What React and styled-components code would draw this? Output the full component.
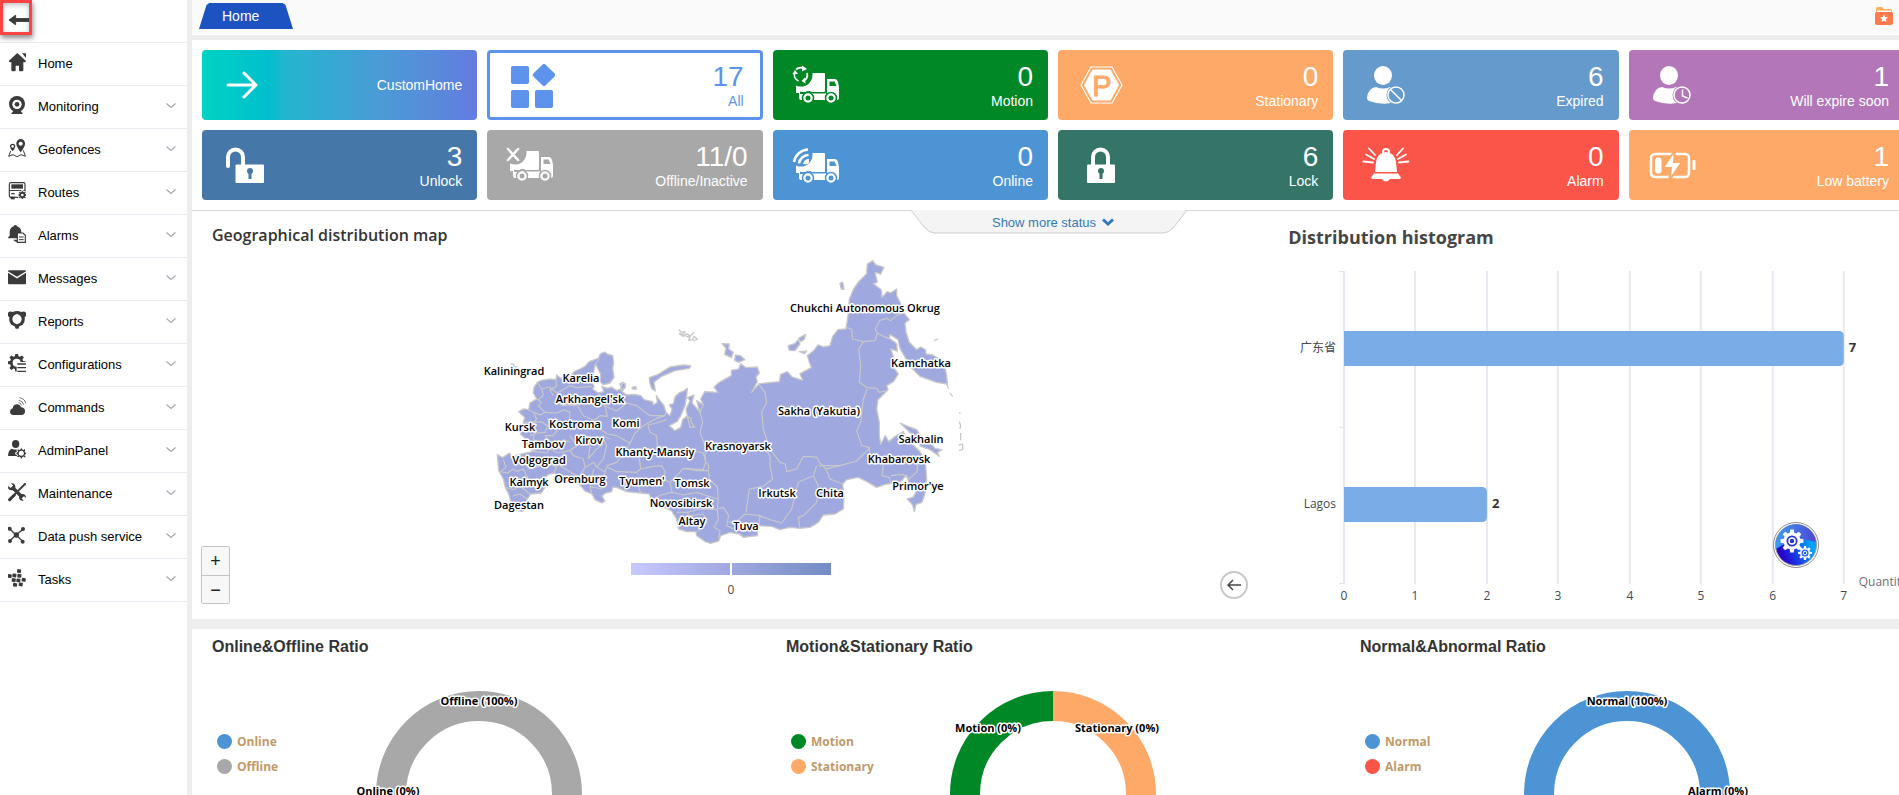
import styled, { createGlobalStyle } from "styled-components";

const App = () => {
  return (
    <Page>
      <GlobalStyle />
      <Sidebar>
        <SidebarTop>
          <CollapseBtn type="button" aria-label="Collapse menu">
            <svg width="21" height="12" viewBox="0 0 22 12">
              <path d="M1 6 8 1v3.500h14v3H8V11z" fill={ICON} stroke={ICON} strokeLinejoin="round" />
            </svg>
          </CollapseBtn>
        </SidebarTop>
        {menuList.map((menu) => (
          <MenuItem key={menu.name} href="#">
            <svg width="18" height="20" viewBox="0 0 54 60" fill={ICON} stroke="none">
              {menu.icon}
            </svg>
            <MenuName>{menu.name}</MenuName>
            {menu.name !== "Home" && (
              <svg width="10" height="6" viewBox="0 0 10 6" fill="none">
                <path d="M0.500 0.500 5 4.500 9.500 0.500" stroke="#a3a7b0" strokeWidth="1.200" />
              </svg>
            )}
          </MenuItem>
        ))}
      </Sidebar>
      <Main>
        <TabBar>
          <Tab href="#">Home</Tab>
          <FavoriteBtn type="button" aria-label="Favorites">
            <svg width="18" height="18" viewBox="0 0 18 18">
              <path d="M1 6V2q0-2 2-2h4l2 2h6q2 0 2 2v4z" fill="#ffab57" />
              <path d="M2 3.500h14V8H2z" fill="#fff" />
              <rect y="5" width="18" height="13" rx="2" fill="#ff7a4d" />
              <path
                d="m9 7.500 1.200 2.600 2.800.3-2.100 1.900.6 2.800L9 13.700l-2.500 1.400.6-2.800L5 10.400l2.800-.3z"
                fill="#fff"
              />
            </svg>
          </FavoriteBtn>
        </TabBar>
        <Content>
          <StatusGrid>
            {statusList.map((status) => (
              <StatusCard key={status.name} type="button" $bg={status.bg} $outlined={status.outlined}>
                <svg width="50" height="50" viewBox="0 0 50 50" fill="currentColor">
                  {status.icon}
                </svg>
                <StatusText>
                  {status.count && <StatusCount>{status.count}</StatusCount>}
                  <StatusName>{status.name}</StatusName>
                </StatusText>
              </StatusCard>
            ))}
          </StatusGrid>
          <ChartRow>
            <MoreStatus type="button">
              <svg width="276" height="24" viewBox="0 0 276 24">
                <path d="M0 0 13 17Q18 23 24 23H252Q258 23 263 17L276 0" fill="#f4f4f4" stroke="#ccc" />
              </svg>
              <MoreStatusText>
                Show more status
                <svg width="12" height="8" viewBox="0 0 12 8" fill="none">
                  <path d="M1 1.500 6 6 11 1.500" stroke="#337ab7" strokeWidth="3" />
                </svg>
              </MoreStatusText>
            </MoreStatus>
            <MapPanel>
              <MapTitle>Geographical distribution map</MapTitle>
              <RegionMap />
              <ZoomBox>
                <ZoomBtn type="button" aria-label="Zoom in">
                  +
                </ZoomBtn>
                <ZoomBtn type="button" aria-label="Zoom out">
                  −
                </ZoomBtn>
              </ZoomBox>
              <BackBtn type="button" aria-label="Back">
                <svg width="14" height="12" viewBox="0 0 14 12" fill="none" stroke="#444" strokeWidth="1.500">
                  <path d="M14 6H1M6 1 1 6l5 5" />
                </svg>
              </BackBtn>
            </MapPanel>
            <HistogramPanel>
              <HistogramTitle>Distribution histogram</HistogramTitle>
              <Histogram />
            </HistogramPanel>
          </ChartRow>
          <RatioRow>
            {ratioList.map((ratio) => (
              <RatioPanel key={ratio.title}>
                <RatioTitle>{ratio.title}</RatioTitle>
                <RatioBody>
                  <Legend>
                    {ratio.legend.map((item) => (
                      <LegendItem key={item.name}>
                        <LegendDot $color={item.color} />
                        {item.name}
                      </LegendItem>
                    ))}
                  </Legend>
                  <Donut colors={ratio.colors} labels={ratio.labels} />
                </RatioBody>
              </RatioPanel>
            ))}
          </RatioRow>
        </Content>
      </Main>
      <SettingsBtn type="button" aria-label="Settings">
        <SettingsIcon />
      </SettingsBtn>
    </Page>
  );
};

const ICON = "#3b3b3b";

// polygon points of a gear with n teeth
const gear = (cx, cy, n, outer, inner) => {
  const points = [];
  for (let i = 0; i < n; i++) {
    const step = (Math.PI * 2) / n;
    [
      [-0.34, inner],
      [-0.2, outer],
      [0.2, outer],
      [0.34, inner],
    ].forEach(([t, r]) => {
      const a = step * (i + t) - Math.PI / 2;
      points.push(`${(cx + r * Math.cos(a)).toFixed(1)},${(cy + r * Math.sin(a)).toFixed(1)}`);
    });
  }
  return points.join(" ");
};

const Truck = ({ cut, y = 0 }) => (
  <g transform={`translate(0 ${y})`}>
    <rect x="9" y="13" width="25" height="19" rx="1" />
    <path d="M36 19h8q2 0 3 3l1 5v11q0 2-2 2H36z" />
    <path d="M38.500 21.500h5l2 4.500h-7z" fill={cut} />
    <path d="M5 24h4v9h26v7H10q-2 0-2-3v-4H5z" />
    <path d="M9 33.500h4Q17 29.500 22 33h12.500" fill="none" stroke={cut} />
    {[17, 40].map((x) => (
      <g key={x}>
        <circle cx={x} cy="38" r="5.500" stroke={cut} strokeWidth="1.500" />
        <circle cx={x} cy="38" r="2.500" fill={cut} />
      </g>
    ))}
    <circle cx="10" cy="15" r="11.500" fill={cut} />
  </g>
);

const Person = () => (
  <>
    <ellipse cx="22" cy="15.500" rx="9" ry="9.500" />
    <path d="M15 27Q22 30 29 27l8 5-3 10Q22 46 8 41q-2-1-2-3Q7 28 15 27z" />
  </>
);

const Keyhole = ({ x, cut }) => (
  <g fill={cut}>
    <circle cx={x} cy="31" r="3" />
    <rect x={x - 1.5} y="31" width="3" height="8" />
  </g>
);

const RegionMap = () => (
  <svg width="500" height="350" viewBox="10 0 500 350" role="img" aria-label="Geographical distribution map">
    <defs>
      <linearGradient id="visualMap">
        <stop offset="0" stopColor="#c8c8ff" />
        <stop offset="0.500" stopColor="#9fa8df" />
        <stop offset="1" stopColor="#748cc4" />
      </linearGradient>
    </defs>
    <g transform="scale(0.33333)" fill="#9fa8df" stroke="#c8c8c8" strokeWidth="4" strokeLinejoin="round">
      {landList.map((points) => (
        <polygon key={points} points={points} />
      ))}
      {borderList.map((points) => (
        <polyline key={points} points={points} fill="none" strokeWidth="3.500" />
      ))}
      {isletList.map((points) => (
        <polyline key={points} points={points} fill="none" />
      ))}
    </g>
    {regionList.map(([name, x, y]) => (
      <MapLabel key={name} x={x} y={y} dy="4">
        {name}
      </MapLabel>
    ))}
    <rect x="161" y="314" width="200" height="12" fill="url(#visualMap)" />
    <rect x="260" y="314" width="2" height="12" fill="#fff" />
    <AxisText x="261" y="345" textAnchor="middle">
      0
    </AxisText>
  </svg>
);

const Histogram = () => (
  <ChartSvg viewBox="0 0 606 350" role="img" aria-label="Distribution histogram">
    {[0, 1, 2, 3, 4, 5, 6, 7].map((n) => {
      const x = 56 + Math.round((n * 500) / 7);
      return (
        <g key={n}>
          <rect x={x - 1} y="11" width="2" height="313" fill="#e8e8f0" />
          <AxisText x={x} y="340" textAnchor="middle">
            {n}
          </AxisText>
        </g>
      );
    })}
    {[11, 167, 323].map((y) => (
      <rect key={y} x="51" y={y} width="5" height="1" fill="#e0e3ee" />
    ))}
    {barList.map((bar) => {
      const right = 56 + Math.round((bar.value * 500) / 7);
      return (
        <g key={bar.name}>
          <path
            d={`M56 ${bar.y}H${right - 5}q5 0 5 5v25q0 5-5 5H56z`}
            fill="#7aade8"
          />
          <AxisText x="48" y={bar.y + 21} textAnchor="end">
            {bar.name}
          </AxisText>
          <BarValue x={right + 5} y={bar.y + 21}>
            {bar.value}
          </BarValue>
        </g>
      );
    })}
    <AxisText x="571" y="326" $light>
      Quantity
    </AxisText>
  </ChartSvg>
);

const Donut = ({ colors, labels }) => (
  <DonutSvg width="206" height="206" viewBox="0 0 206 206">
    <path d="M103 15A88 88 0 0 0 103 191" fill="none" stroke={colors[0]} strokeWidth="30" />
    <path d="M103 15A88 88 0 0 1 103 191" fill="none" stroke={colors[1]} strokeWidth="30" />
    {labels.map(([text, x, y]) => (
      <DonutLabel key={text} x={x} y={y} dy="3">
        {text}
      </DonutLabel>
    ))}
  </DonutSvg>
);

const SettingsIcon = () => (
  <svg width="46" height="46" viewBox="0 0 46 46">
    <defs>
      <linearGradient id="ball" x1="0.200" y1="0.900" x2="0.900" y2="0.600">
        <stop offset="0" stopColor="#2a00c8" />
        <stop offset="0.450" stopColor="#1a3ee8" />
        <stop offset="1" stopColor="#00a2ff" />
      </linearGradient>
      <linearGradient id="shine">
        <stop offset="0" stopColor="#3b9bf2" />
        <stop offset="1" stopColor="#5046d2" />
      </linearGradient>
    </defs>
    <circle cx="23" cy="23" r="22.500" fill="#fff" stroke="#8a8a8a" />
    <circle cx="23" cy="23" r="20.500" fill="url(#ball)" stroke="#9a9a9a" />
    <path d="M3 25A20 20 0 0 1 43 20Q22 14 3 27z" fill="url(#shine)" />
    <polygon points={gear(19, 19, 8, 11.5, 8.5)} fill="#fff" />
    <circle cx="19" cy="19" r="5.500" fill="#2a35d0" />
    <circle cx="19" cy="19" r="3" fill="none" stroke="#fff" strokeWidth="1.500" />
    <polygon points={gear(32, 31, 8, 7, 5)} fill="#fff" />
    <circle cx="32" cy="31" r="3.500" fill="#1566ee" />
    <circle cx="32" cy="31" r="1.800" fill="none" stroke="#fff" />
  </svg>
);

const GlobalStyle = createGlobalStyle`
  * {
    box-sizing: border-box;
  }
  body {
    margin: 0;
    font-family: "Liberation Sans", Arial, sans-serif;
    color: #333;
  }
  button {
    padding: 0;
    font-family: inherit;
    cursor: pointer;
  }
  h2 {
    margin: 0;
  }
  svg {
    display: block;
    flex-shrink: 0;
  }
`;

const Page = styled.div`
  display: flex;
  height: 100vh;
  overflow: hidden;
  background-color: #fff;
`;

const Sidebar = styled.nav`
  flex: none;
  width: 192px;
  border-right: 5px solid #ededed;
`;

const SidebarTop = styled.div`
  height: 43px;
  border-bottom: 1px solid #e9eaf2;
`;

const CollapseBtn = styled.button`
  display: flex;
  justify-content: flex-end;
  align-items: center;
  width: 32px;
  height: 35px;
  padding-top: 4px;
  border: 3px solid #fd4444;
  background-color: #fff;
  box-shadow: 1px 3px 5px rgba(0, 0, 0, 0.45), inset 0 2px 5px rgba(0, 0, 0, 0.25);
`;

const MenuItem = styled.a`
  display: flex;
  align-items: center;
  height: 43px;
  padding: 0 11px 2px 8px;
  border-bottom: 1px solid #e9eaf2;
  color: #000;
  text-decoration: none;
`;

const MenuName = styled.span`
  flex: 1;
  padding-left: 12px;
  font-size: 13px;
`;

const Main = styled.main`
  flex: 1;
  min-width: 0;
  overflow: hidden;
  background-color: #ededed;
`;

const TabBar = styled.header`
  display: flex;
  justify-content: space-between;
  height: 35px;
  padding: 3px 6px 0 7px;
  border-bottom: 1px solid #fff;
  background-color: #fafafa;
`;

const Tab = styled.a`
  width: 94px;
  height: 26px;
  padding-left: 23px;
  clip-path: polygon(0 100%, 8% 8%, 11% 0, 89% 0, 92% 8%, 100% 100%);
  background-color: #1c53c0;
  color: #fff;
  font-size: 14px;
  line-height: 26px;
  text-decoration: none;
`;

const FavoriteBtn = styled.button`
  height: 26px;
  border: none;
  background: none;
`;

// the board is a little wider than the window
const Content = styled.div`
  width: calc(100% + 15px);
  margin-top: 5px;
`;

const StatusGrid = styled.section`
  display: grid;
  grid-template-columns: repeat(6, 1fr);
  gap: 10px;
  padding: 10px;
  border-bottom: 1px solid #d8d8d8;
  background-color: #fff;
`;

const StatusCard = styled.button`
  display: flex;
  justify-content: space-between;
  align-items: center;
  height: 70px;
  padding: 0 ${({ $outlined }) => ($outlined ? "16px 0 15px" : "15px 0 18px")};
  border: ${({ $outlined }) => ($outlined ? "3px solid #5e93ed" : "none")};
  border-radius: 4px;
  background: ${({ $bg }) => $bg};
  color: ${({ $outlined }) => ($outlined ? "#5e93ed" : "#fff")};
`;

const StatusText = styled.span`
  display: flex;
  flex-direction: column;
  align-items: flex-end;
`;

const StatusCount = styled.span`
  padding-top: 3px;
  font-size: 28px;
  line-height: 28px;
`;

const StatusName = styled.span`
  font-size: 14px;
  line-height: 20px;
`;

const ChartRow = styled.section`
  display: grid;
  grid-template-columns: 5fr 3fr;
  position: relative;
  min-height: 408px;
  background-color: #fff;
`;

const MoreStatus = styled.button`
  position: absolute;
  top: -1px;
  left: 50%;
  margin-left: -142px;
  border: none;
  background: none;
`;

const MoreStatusText = styled.span`
  display: flex;
  justify-content: center;
  align-items: center;
  gap: 6px;
  position: absolute;
  inset: 0;
  padding-left: 8px;
  color: #337ab7;
  font-size: 13px;
`;

const MapPanel = styled.div`
  display: flex;
  flex-direction: column;
  align-items: center;
  gap: 2px;
  position: relative;
  padding-top: 12px;
`;

const MapTitle = styled.h2`
  align-self: flex-start;
  padding-left: 20px;
  font-family: "Open Sans", sans-serif;
  font-size: 16px;
  font-weight: 600;
  line-height: 24px;
`;

const ZoomBox = styled.div`
  display: flex;
  flex-direction: column;
  position: absolute;
  left: 9px;
  bottom: 15px;
  border: 1px solid #c4c4c4;
  border-radius: 2px;
`;

const ZoomBtn = styled.button`
  width: 27px;
  height: 28px;
  border: none;
  background-color: #f7f7f7;
  color: #222;
  font-size: 18px;
  line-height: 26px;
  & + & {
    border-top: 1px solid #c4c4c4;
  }
`;

const BackBtn = styled.button`
  display: flex;
  justify-content: center;
  align-items: center;
  position: absolute;
  right: 20px;
  bottom: 20px;
  width: 28px;
  height: 28px;
  border: 2px solid #c8c8c8;
  border-radius: 50%;
  background-color: #fff;
`;

const HistogramPanel = styled.div`
  padding: 14px 20px 0;
`;

const HistogramTitle = styled.h2`
  margin-bottom: 11px;
  color: #464646;
  font-family: "Open Sans", sans-serif;
  font-size: 18px;
  font-weight: 700;
  line-height: 24px;
`;

const ChartSvg = styled.svg`
  width: 100%;
  overflow: visible;
`;

const AxisText = styled.text`
  fill: ${({ $light }) => ($light ? "#6e7079" : "#444a54")};
  font-family: "Open Sans", "Noto Sans CJK SC", sans-serif;
  font-size: 12px;
`;

const BarValue = styled.text`
  fill: #333;
  font-family: "Open Sans", sans-serif;
  font-size: 13px;
  font-weight: 700;
`;

const MapLabel = styled.text`
  fill: #000;
  stroke: #fff;
  stroke-width: 3px;
  stroke-linejoin: round;
  paint-order: stroke;
  font-family: "Open Sans", sans-serif;
  font-size: 11px;
  font-weight: 600;
  text-anchor: middle;
`;

const RatioRow = styled.section`
  display: grid;
  grid-template-columns: repeat(3, 1fr);
  min-height: 300px;
  margin-top: 10px;
  background-color: #fff;
`;

const RatioPanel = styled.div`
  padding-top: 8px;
`;

const RatioTitle = styled.h2`
  padding-left: 20px;
  font-size: 16px;
  line-height: 20px;
`;

const RatioBody = styled.div`
  display: grid;
  grid-template-columns: 1fr 206px 1fr;
  margin-top: 34px;
`;

const Legend = styled.ul`
  display: flex;
  flex-direction: column;
  margin: 0;
  padding: 38px 0 0 25px;
  list-style: none;
`;

const LegendItem = styled.li`
  display: flex;
  align-items: center;
  gap: 5px;
  height: 25px;
  color: #c09a68;
  font-family: "Open Sans", sans-serif;
  font-size: 12px;
  font-weight: 700;
`;

const LegendDot = styled.span`
  width: 15px;
  height: 15px;
  border-radius: 50%;
  background-color: ${({ $color }) => $color};
`;

const DonutSvg = styled.svg`
  overflow: visible;
`;

const DonutLabel = styled(MapLabel)`
  font-weight: 700;
`;

const SettingsBtn = styled.button`
  position: fixed;
  right: 80px;
  bottom: 227px;
  border: none;
  border-radius: 50%;
  background: none;
`;

export default App;

const menuList = [
  {
    name: "Home",
    icon: (
      <>
        <path d="M28 0 2 24q2 6 8 3v25q0 3 4 3h6q3 0 3-3V38h10v14q0 3 3 3h6q4 0 4-3V27q6 3 8-3z" />
        <path d="M42 1h12v14z" />
      </>
    ),
  },
  {
    name: "Monitoring",
    icon: (
      <>
        <circle cx="27" cy="24" r="24" />
        <circle cx="27" cy="25" r="14" fill="#fff" />
        <circle cx="27" cy="25" r="7" />
        <path d="M16 45h22l7 9H9z" />
      </>
    ),
  },
  {
    name: "Geofences",
    icon: (
      <>
        <path d="M38 0a13 13 0 0 1 13 14q0 9-13 26Q25 23 25 14A13 13 0 0 1 38 0zm0 8a6 6 0 1 0 .1 0z" fillRule="evenodd" />
        <path d="M14 14a8 8 0 0 1 8 8q0 6-8 15Q6 28 6 22a8 8 0 0 1 8-8zm0 4a4 4 0 1 0 .1 0z" fillRule="evenodd" />
        <path d="M8 36 2 52l13-5 12 6 12-6 13 5-6-18" fill="none" stroke={ICON} strokeWidth="3" />
      </>
    ),
  },
  {
    name: "Routes",
    icon: (
      <>
        <rect x="4" y="2" width="47" height="44" rx="5" fill="none" stroke={ICON} strokeWidth="3.500" />
        <rect x="10" y="7" width="35" height="13" />
        <rect x="4" y="24" width="47" height="3" />
        <rect x="10" y="33" width="10" height="4" />
        <rect x="8" y="44" width="12" height="8" />
        <polygon points={gear(43, 39, 8, 14, 11)} stroke="#fff" strokeWidth="3" />
        <circle cx="43" cy="39" r="4" fill="#fff" />
      </>
    ),
  },
  {
    name: "Alarms",
    icon: (
      <>
        <path d="M22 0q4 0 5 4 13 5 13 18v18H0q0-5 5-8V20Q6 8 17 4q1-4 5-4z" />
        <path d="M16 44h12v6q-8 2-12-6z" />
        <path d="M28 24h17l7 7v21H28z" fill="#fff" stroke={ICON} strokeWidth="3.500" />
        <path d="M33 36h14M33 44h14" stroke={ICON} strokeWidth="3" />
      </>
    ),
  },
  {
    name: "Messages",
    icon: (
      <>
        <rect y="7" width="54" height="42" rx="3" />
        <path d="M0 12 27 29 54 12" fill="none" stroke="#fff" strokeWidth="4" />
      </>
    ),
  },
  {
    name: "Reports",
    icon: (
      <path
        d="M0 5Q6-1 14 3 27-3 40 3 48-1 54 5V15l-4 4q2 15-6 22l-10 5-3 7h-8l-3-7-10-5Q2 34 4 19L0 15zM27 9q-13 3-14 16 1 12 14 15 13-3 14-15Q40 12 27 9z"
        fillRule="evenodd"
      />
    ),
  },
  {
    name: "Configurations",
    icon: (
      <>
        <polygon points={gear(26, 26, 8, 27, 20)} />
        <circle cx="26" cy="26" r="12" fill="#fff" />
        <path d="M26 24h28v32H26z" fill="#fff" />
        <path d="M28 30h26M28 41h26M28 52h26" stroke={ICON} strokeWidth="4" />
      </>
    ),
  },
  {
    name: "Commands",
    icon: (
      <>
        <path d="M16 54q-10-1-10-10 0-8 8-10Q16 22 27 22q9 0 12 9 12 1 12 12 0 10-9 11z" />
        <path d="M32 17q7 1 8 8M32 10q13 2 15 13M34 2q17 3 19 17" fill="none" stroke="#555" strokeWidth="2.500" />
      </>
    ),
  },
  {
    name: "AdminPanel",
    icon: (
      <>
        <ellipse cx="23" cy="12" rx="11" ry="12" />
        <path d="M0 48Q0 30 12 26q10 5 20 0l6 3-10 19z" />
        <polygon points={gear(40, 40, 8, 17, 13)} stroke="#fff" strokeWidth="3" />
        <circle cx="40" cy="40" r="7.500" fill="#fff" />
      </>
    ),
  },
  {
    name: "Maintenance",
    icon: (
      <>
        <path d="M51 3 31 23M23 31 5 50" stroke={ICON} strokeWidth="6" strokeLinecap="round" />
        <path d="M5 50 19 36" stroke={ICON} strokeWidth="9" strokeLinecap="round" />
        <path d="M12 12 42 42" stroke={ICON} strokeWidth="10" />
        <path d="M9 1 16 8 8 15 1 9Q-2 21 10 22 23 23 22 10 20-1 9 1z" />
        <path d="M33 42q0-10 11-9 10 1 10 12l-6-5-7 6 6 7q-13 2-14-11z" />
      </>
    ),
  },
  {
    name: "Data push service",
    icon: (
      <>
        <path d="M5 8 24 27 44 46M46 9 24 27 6 44" fill="none" stroke={ICON} strokeWidth="4" />
        <circle cx="25" cy="27" r="8" />
        {[
          [5, 8],
          [45, 9],
          [6, 45],
          [44, 47],
        ].map(([x, y]) => (
          <circle key={x + y} cx={x} cy={y} r="6" />
        ))}
      </>
    ),
  },
  {
    name: "Tasks",
    icon: [
      [28, 0],
      [0, 15],
      [14, 13],
      [29, 14],
      [12, 27],
      [26, 28],
      [42, 26],
      [16, 41],
      [33, 40],
    ].map(([x, y]) => <rect key={x} x={x} y={y} width="12" height="11" rx="2" transform={`rotate(8 ${x} ${y})`} />),
  },
];

const statusList = [
  {
    name: "CustomHome",
    bg: "linear-gradient(90deg, #00d3c4 0%, #00bfcd 24%, #23b5cf 30%, #4c9ad6 66%, #637cdf 100%)",
    icon: (
      <path d="M8 25H36M24 13 36 25 24 37" fill="none" stroke="#fff" strokeWidth="3" strokeLinecap="round" strokeLinejoin="round" />
    ),
  },
  {
    name: "All",
    count: "17",
    bg: "#fff",
    outlined: true,
    icon: (
      <>
        <rect x="6" y="6" width="18" height="18" rx="2" />
        <rect x="6" y="30" width="18" height="18" rx="2" />
        <rect x="30" y="30" width="18" height="18" rx="2" />
        <rect x="30.500" y="6.500" width="17" height="17" rx="2" transform="rotate(45 39 15)" />
      </>
    ),
  },
  {
    name: "Motion",
    count: "0",
    bg: "#008826",
    icon: (
      <>
        <Truck cut="#008826" />
        <path
          d="M5 9.500A7 7 0 0 1 13 8.500M16 13A7 7 0 0 1 12.500 21M7.500 21A7 7 0 0 1 3.500 13"
          fill="none"
          stroke="#fff"
          strokeWidth="1.800"
        />
        <path d="m11 5.500 5 3.500-5 2.500zM14.500 23.500l-4-2.500 3.500-3.500zM1.500 14l2.500-4 3 4z" />
      </>
    ),
  },
  {
    name: "Stationary",
    count: "0",
    bg: "#ffa968",
    icon: (
      <>
        <path d="M5 25 15 7H36L46 25 36 43H15z" fill="none" stroke="#fff" strokeWidth="1.200" />
        <path d="M8 25 16.500 9.500h18L43 25 34.500 40.500h-18z" />
        <text x="26" y="36" fontSize="29" textAnchor="middle" fill="#ffa968" stroke="#ffa968">
          P
        </text>
      </>
    ),
  },
  {
    name: "Expired",
    count: "6",
    bg: "#659acc",
    icon: (
      <>
        <Person />
        <circle cx="35" cy="35" r="9.500" fill="#659acc" />
        <circle cx="35" cy="35" r="8" fill="none" stroke="#fff" strokeWidth="1.500" />
        <path d="m29.500 29.500 11 11" stroke="#fff" strokeWidth="1.500" />
      </>
    ),
  },
  {
    name: "Will expire soon",
    count: "1",
    bg: "#b377b9",
    icon: (
      <>
        <Person />
        <circle cx="35" cy="35" r="9.500" fill="#b377b9" />
        <circle cx="35" cy="35" r="8" fill="none" stroke="#fff" strokeWidth="1.500" />
        <path d="M35.500 29.500V36l5 2" fill="none" stroke="#fff" strokeWidth="1.500" />
      </>
    ),
  },
  {
    name: "Unlock",
    count: "3",
    bg: "#4578a9",
    icon: (
      <>
        <path d="M8 26V17a7.500 7.500 0 0 1 15 0v8" fill="none" stroke="#fff" strokeWidth="4" strokeLinecap="round" />
        <rect x="15.500" y="24.500" width="28.500" height="18.500" rx="1" />
        <Keyhole x={30} cut="#4578a9" />
      </>
    ),
  },
  {
    name: "Offline/Inactive",
    count: "11/0",
    bg: "#a8a8a8",
    icon: (
      <>
        <Truck cut="#a8a8a8" y={-2} />
        <path d="m3 9 10 11M13 9 3 20" stroke="#fff" strokeWidth="2.500" strokeLinecap="round" />
      </>
    ),
  },
  {
    name: "Online",
    count: "0",
    bg: "#4d94d5",
    icon: (
      <>
        <Truck cut="#4d94d5" />
        <path d="M3 22A15 15 0 0 1 17 9.500M8 23.500A10 10 0 0 1 17.500 15" fill="none" stroke="#fff" strokeWidth="2.500" />
        <path d="M12 24q1-5 6-5v4q-2 2-6 1z" />
      </>
    ),
  },
  {
    name: "Lock",
    count: "6",
    bg: "#347568",
    icon: (
      <>
        <path d="M17 25V17a7.500 7.500 0 0 1 15 0v8" fill="none" stroke="#fff" strokeWidth="4" />
        <rect x="11" y="24.500" width="28" height="18.500" rx="1" />
        <Keyhole x={25} cut="#347568" />
      </>
    ),
  },
  {
    name: "Alarm",
    count: "0",
    bg: "#fb5549",
    icon: (
      <>
        <circle cx="25" cy="12" r="3" fill="none" stroke="#fff" strokeWidth="2" />
        <path d="M25 12q9 1 10 10l1 10H14l1-10q1-9 10-10z" />
        <path d="M13 33.500h24l3 4-1 1.500H29q-4 5-8 0H11l-1-1.500z" />
        <path
          d="m2.500 21.500 9.500 1M5 14.500l8 4.500M8 8.500l6 6.500M47.500 21.500l-9.500 1M45 14.500 37 19M42 8.500 36 15"
          stroke="#fff"
          strokeWidth="1.800"
          strokeLinecap="round"
        />
      </>
    ),
  },
  {
    name: "Low battery",
    count: "1",
    bg: "#ffa968",
    icon: (
      <>
        <rect x="4" y="14" width="38" height="23" rx="4" fill="none" stroke="#fff" strokeWidth="2.500" />
        <rect x="8" y="17.500" width="6.500" height="16" rx="3" />
        <rect x="45.500" y="20" width="3" height="10" rx="1" />
        <path d="M28 10 16 28h8l-2 13L35 22h-8z" stroke="#ffa968" strokeWidth="2" />
      </>
    ),
  },
];

const barList = [
  { name: "广东省", value: 7, y: 71 },
  { name: "Lagos", value: 2, y: 227 },
];

const ratioList = [
  {
    title: "Online&Offline Ratio",
    legend: [
      { name: "Online", color: "#4d94d5" },
      { name: "Offline", color: "#a8a8a8" },
    ],
    colors: ["#a8a8a8", "#a8a8a8"],
    labels: [
      ["Offline (100%)", 103, 11],
      ["Online (0%)", 12, 101],
    ],
  },
  {
    title: "Motion&Stationary Ratio",
    legend: [
      { name: "Motion", color: "#008826" },
      { name: "Stationary", color: "#ffa968" },
    ],
    colors: ["#008826", "#ffa968"],
    labels: [
      ["Motion (0%)", 38, 38],
      ["Stationary (0%)", 167, 38],
    ],
  },
  {
    title: "Normal&Abnormal Ratio",
    legend: [
      { name: "Normal", color: "#4d94d5" },
      { name: "Alarm", color: "#fb5549" },
    ],
    colors: ["#4d94d5", "#4d94d5"],
    labels: [
      ["Normal (100%)", 103, 11],
      ["Alarm (0%)", 194, 101],
    ],
  },
];

const regionList = [
  ["Chukchi Autonomous Okrug", 395, 59],
  ["Kamchatka", 451, 114],
  ["Kaliningrad", 44, 122],
  ["Karelia", 111, 129],
  ["Arkhangel'sk", 120, 150],
  ["Kursk", 50, 178],
  ["Kostroma", 105, 175],
  ["Komi", 156, 174],
  ["Tambov", 73, 195],
  ["Kirov", 119, 191],
  ["Volgograd", 69, 211],
  ["Khanty-Mansiy", 185, 203],
  ["Krasnoyarsk", 268, 197],
  ["Sakha (Yakutia)", 349, 162],
  ["Sakhalin", 451, 190],
  ["Khabarovsk", 429, 210],
  ["Kalmyk", 59, 233],
  ["Orenburg", 110, 230],
  ["Tyumen'", 172, 232],
  ["Tomsk", 222, 234],
  ["Dagestan", 49, 256],
  ["Novosibirsk", 211, 254],
  ["Irkutsk", 307, 244],
  ["Chita", 360, 244],
  ["Primor'ye", 448, 237],
  ["Altay", 222, 272],
  ["Tuva", 276, 277],
];

const landList = [
  // mainland
  `82,617 98,626 118,612 126,622 150,616 190,607 168,590 170,572 152,556 150,545 160,520 164,505
  146,488 160,480 176,482 180,462 200,450 190,432 192,415 202,400 215,394 240,390 258,392 260,378 272,388
  290,384 305,378 312,368 330,360 345,352 358,338 385,328 392,314 404,309 412,315 428,320 431,340 428,358
  432,385 420,402 400,407 388,396 392,375 376,345 370,372 366,398 372,412 368,420 384,432 402,428 396,412
  412,418 424,414 440,424 456,420 449,404 460,400 467,412 456,428 470,438 492,436 512,440 522,452 548,458
  550,468 562,460 559,440 570,455 582,470 588,490 600,500 606,480 598,468 610,464 616,442 630,430 640,427
  652,418 650,440 645,470 632,500 622,517 598,530 615,545 632,535 638,512 650,502 662,507 664,520 674,534
  660,535 654,510 648,480 660,455 652,446 672,438 666,462 682,480 690,490 680,455 700,468 692,450 704,428
  744,430 732,414 748,400 784,380 784,364 806,360 812,344 828,356 862,354 868,372 858,384 862,398 845,430
  868,404 888,402 928,398 932,376 952,368 966,384 998,394 990,374 1024,356 1018,340 1012,320 1032,304
  1044,288 1060,294 1080,290 1088,262 1104,242 1128,240 1134,200 1138,150 1152,118 1166,98 1190,74 1192,45
  1208,35 1218,48 1242,55 1232,75 1215,70 1222,100 1210,104 1234,122 1236,145 1252,128 1262,132 1280,120
  1280,140 1290,160 1300,190 1318,212 1305,222 1308,250 1318,280 1340,302 1352,294 1366,302 1368,315 1388,318
  1412,332 1424,352 1430,380 1432,405 1400,400 1350,382 1318,350 1304,322 1290,298 1284,272 1260,256
  1258,268 1280,284 1282,306 1262,300 1270,322 1266,350 1285,375 1270,398 1250,410 1254,422 1224,452
  1220,480 1228,520 1228,560 1232,586 1246,560 1256,578 1276,562 1300,548 1310,568 1330,588 1350,608
  1366,640 1370,690 1366,730 1356,760 1338,766 1333,788 1328,768 1312,750 1330,744 1338,728 1316,700
  1310,678 1290,700 1262,704 1246,706 1220,715 1195,700 1165,685 1130,692 1118,705 1122,740 1120,780
  1095,795 1060,798 1045,820 1020,835 990,838 960,835 930,842 905,832 865,830 862,860 820,865 808,855
  780,850 752,860 746,876 722,883 706,878 680,860 678,848 650,848 626,840 620,810 604,785 570,770 545,755
  538,735 512,732 470,728 440,715 428,714 425,728 405,733 396,742 405,756 395,762 375,752 366,735 345,726
  328,706 300,695 270,700 254,672 236,676 218,692 230,708 214,732 182,735 172,750 158,788 140,784 124,762
  116,735 106,715 100,690 86,665`,
  // novaya zemlya
  "538,386 565,376 600,354 640,348 662,350 658,358 615,365 575,382 552,400 556,426 546,420 540,405",
  // severnaya zemlya
  "756,284 778,285 776,300 790,310 784,326 764,316 768,298",
  "796,318 812,320 825,332 805,340 794,334",
  // new siberian islands
  "954,290 974,284 985,272 990,285 975,305 958,304",
  "986,268 1006,256 1004,270 992,278",
  "988,308 1010,306 1004,314",
  "1110,103 1118,99 1122,122 1114,120",
  "456,402 466,404 466,416 452,424",
  "486,416 496,412 500,420 488,420",
  // sakhalin
  "1290,522 1318,534 1340,542 1352,560 1376,578 1395,598 1416,602 1402,610 1408,622 1380,602 1352,592 1326,556",
];

const borderList = [
  // kola, karelia, north-west
  "376,345 388,330",
  "258,392 260,412 240,422 250,440",
  "202,400 215,420 238,414 262,432 300,410 320,416 366,412",
  "200,450 215,460 205,470 225,490 212,498 190,490 176,482",
  "215,420 220,438 206,452",
  "262,432 258,460 280,470 322,468 340,500 372,514 390,500 412,502 405,470 385,432",
  "405,470 420,478 440,486 470,462 500,470 540,500 584,500 588,490",
  "225,490 262,492 280,482 300,490 298,510 330,530",
  "584,500 560,508 520,530 495,552 480,582 440,560 412,555 390,540",
  // centre
  "190,490 200,510 190,520 215,518 232,530 226,550 200,552 180,560",
  "232,505 240,530 262,545 250,560 225,560 240,580 262,590 280,572 300,580",
  "160,520 190,520 196,540 190,570 210,590 190,607 230,612 240,600 262,612 300,604 320,590",
  "120,625 160,640 180,660 210,650 232,640 260,655 250,672",
  "300,560 320,590 300,604 310,620 340,630 345,655 330,680 300,690",
  "280,612 290,640 270,650 300,668 320,680",
  "345,560 360,590 355,630 380,600 395,590 400,560 420,570",
  "395,560 410,590 400,630 380,655 372,640 345,655",
  "380,655 405,668 412,650 440,640 470,600 480,582",
  "372,660 362,690 330,705",
  "405,668 400,690 410,700 395,720 360,712 365,735",
  "412,655 440,668 500,670 512,660",
  "100,632 108,655 92,668 112,672 130,660 140,668 160,660 175,690",
  "106,715 130,722 150,712 180,735",
  "130,740 150,735 172,750",
  "120,690 150,700 160,720",
  // west siberia
  "534,528 540,550 560,560 562,590 600,600 640,600 700,612 706,635",
  "534,528 560,522 590,512",
  "506,610 512,660 550,652 575,650 586,670 580,690 600,700",
  "706,640 700,662 640,658 620,680 600,700 606,730 572,738 548,752",
  "640,658 680,665 715,664 718,690 742,714 745,750 742,780",
  "606,730 640,738 680,730 742,750",
  "500,700 512,732",
  "620,790 650,790 690,780 742,782",
  "650,790 660,800 700,795 712,820 690,840 680,848",
  "742,780 760,775 776,800 770,830 790,840",
  "742,782 745,812 732,835 750,845 746,870",
  "640,820 660,826 700,812",
  // krasnoyarsk
  "690,490 698,520 690,550 705,590 706,635 716,650 715,664",
  "700,468 690,490",
  "865,404 885,430 890,460 875,490 880,540 890,570 885,600 900,620 900,650 908,690 880,712 838,720 828,790",
  "776,820 800,818 825,795 870,800 868,825",
  // irkutsk, chita
  "900,600 930,640 946,645 950,668 980,660 1000,622 1040,624 1048,640 1068,660",
  "868,800 900,812 935,822 965,780 975,740 985,700 1030,680 1040,650",
  "1030,680 1045,710 1040,760 1000,800 985,806 990,838",
  "1068,660 1080,690 1118,705",
  "1046,650 1110,650 1160,636 1200,596",
  // yakutia, far east
  "1068,660 1110,650",
  "1200,596 1175,590 1160,545 1172,520 1180,450 1192,420",
  "1192,416 1168,400 1172,350 1166,300 1180,278",
  "1126,234 1145,240 1148,270 1180,278 1215,275 1222,252 1240,262 1258,268",
  "1222,252 1216,240 1230,214 1250,208 1262,215 1280,200 1300,192",
  "1192,416 1220,418 1228,430 1250,425",
  "1196,596 1202,620 1240,650 1236,680 1258,685 1262,704",
  "1262,680 1300,676 1316,690 1340,670 1345,640 1366,645",
];

const isletList = [
  "626,242 634,250 646,248 640,256 628,254 640,262 652,254 660,262 672,250",
  "648,262 660,264 656,274 668,272 672,262 682,270 670,276",
  "122,344 132,346 130,354 142,354",
  "1392,275 1404,270",
  "1430,405 1436,420",
  "1440,432 1448,442",
  "1468,490 1471,494",
  "1468,518 1472,530 1470,540",
  "1472,552 1472,574",
  "1466,588 1478,586 1478,602 1466,604",
];
